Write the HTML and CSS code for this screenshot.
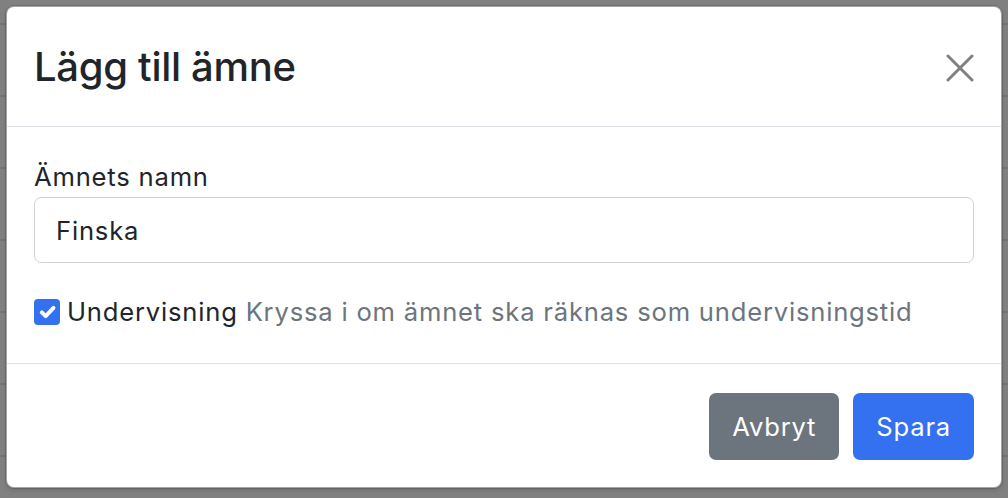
FILE: index.html
```html
<!DOCTYPE html>
<html lang="sv">
<head>
<meta charset="utf-8">
<title>Lägg till ämne</title>
<link rel="stylesheet" href="styles.css">
</head>
<body>
<div class="backdrop">
  <div class="modal">
    <div class="modal-header">
      <h3 class="modal-title">Lägg till ämne</h3>
      <button class="btn-close" type="button" aria-label="Stäng">
        <svg viewBox="0 0 28 28" width="28" height="28" aria-hidden="true">
          <path d="M2 2 L26 26 M26 2 L2 26" stroke="#808080" stroke-width="3" stroke-linecap="round" fill="none"/>
        </svg>
      </button>
    </div>
    <div class="modal-body">
      <label class="form-label" for="namn">Ämnets namn</label>
      <input class="form-control" id="namn" type="text" value="Finska">
      <div class="form-check">
        <span class="check-box" aria-hidden="true">
          <svg viewBox="0 0 20 20" width="26" height="26">
            <path d="M6 10.2l3 3l6-6.4" stroke="#fff" stroke-width="3" stroke-linecap="round" stroke-linejoin="round" fill="none"/>
          </svg>
        </span>
        <span class="check-label">Undervisning <span class="muted">Kryssa i om ämnet ska räknas som undervisningstid</span></span>
      </div>
    </div>
    <div class="modal-footer">
      <button class="btn btn-secondary" type="button">Avbryt</button>
      <button class="btn btn-primary" type="button">Spara</button>
    </div>
  </div>
</div>
</body>
</html>
```

FILE: styles.css
```css
* { box-sizing: border-box; }

html, body {
  margin: 0;
  padding: 0;
  width: 1008px;
  height: 498px;
  overflow: hidden;
}

body {
  font-family: Inter, "Liberation Sans", sans-serif;
  color: #212529;
  background-color: #808080;
  background-image: repeating-linear-gradient(to bottom,
    transparent 0px, transparent 23px,
    #747474 23px, #747474 25px,
    transparent 25px, transparent 72px);
}

.backdrop {
  padding: 6px 6px 0 6px;
}

.modal {
  width: 996px;
  height: 482px;
  background: #fff;
  border: 1px solid rgba(0, 0, 0, 0.35);
  border-radius: 8px;
  box-shadow: 0 0 0 1px rgba(0, 0, 0, 0.12), 0 2px 4px rgba(0, 0, 0, 0.15);
  display: flex;
  flex-direction: column;
}

.modal-header {
  display: flex;
  align-items: center;
  justify-content: space-between;
  height: 120px;
  padding: 0 27px;
  border-bottom: 1px solid #dee2e6;
}

.modal-title {
  margin: 0;
  font-size: 40px;
  font-weight: 500;
  line-height: 48px;
  letter-spacing: -0.3px;
  color: #212529;
}

.btn-close {
  width: 28px;
  height: 28px;
  padding: 0;
  border: 0;
  background: transparent;
  display: flex;
  margin-top: 2px;
}

.modal-body {
  padding: 31px 27px 0 27px;
  height: 237px;
  border-bottom: 1px solid #dee2e6;
  letter-spacing: 0.8px;
}

.form-label {
  display: block;
  font-size: 25.6px;
  line-height: 38.4px;
  margin-bottom: 1px;
}

.form-control {
  display: block;
  width: 100%;
  height: 66px;
  padding: 0 21px;
  font-family: inherit;
  font-size: 25.6px;
  letter-spacing: 0.8px;
  color: #212529;
  border: 1.6px solid #ced4da;
  border-radius: 7px;
  background: #fff;
  outline: none;
  margin-top: 1px;
}

.form-check {
  display: flex;
  align-items: center;
  margin-top: 30px;
  font-size: 25.6px;
  line-height: 38.4px;
}

.check-box {
  width: 26px;
  height: 26px;
  border-radius: 4px;
  background: #3371f0;
  display: flex;
  flex: none;
  margin-right: 7px;
  margin-top: -2px;
}

.muted {
  color: #6c757d;
}

.modal-footer {
  flex: 1;
  display: flex;
  justify-content: flex-end;
  align-items: center;
  gap: 14px;
  padding: 1px 27px 0 27px;
}

.btn {
  height: 67px;
  padding: 0 23px;
  border: 0;
  border-radius: 7px;
  font-family: inherit;
  font-size: 25.6px;
  letter-spacing: 0.8px;
  color: #fff;
}

.btn-secondary {
  background: #6c757d;
}

.btn-primary {
  background: #3371f0;
}
```
